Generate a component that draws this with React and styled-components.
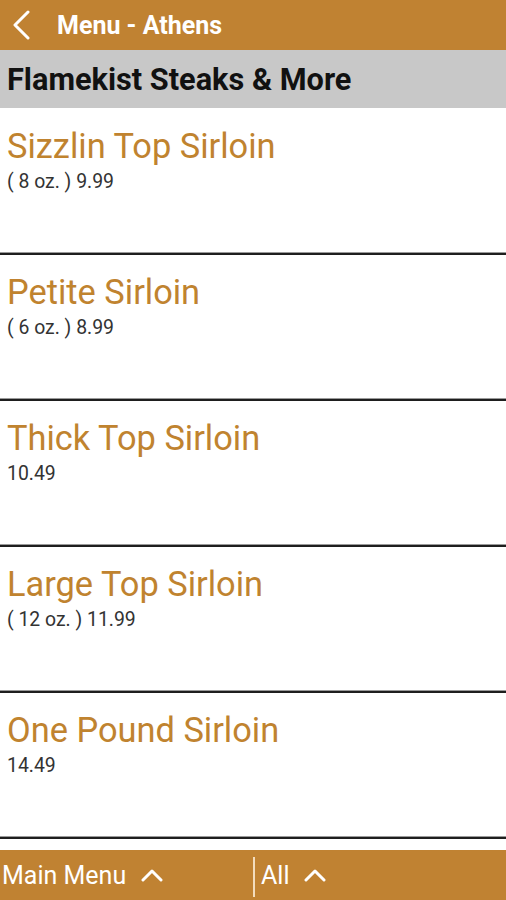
import styled, { createGlobalStyle } from 'styled-components';

const GlobalStyle = createGlobalStyle`
  html, body {
    margin: 0;
    padding: 0;
    background: #fff;
    font-family: Roboto, "Liberation Sans", sans-serif;
  }
`;

const Screen = styled.div`
  width: 506px;
  height: 900px;
  display: flex;
  flex-direction: column;
  overflow: hidden;
  background: #fff;
`;

const TopBar = styled.div`
  height: 50px;
  background: #c08232;
  display: flex;
  align-items: center;
  padding-left: 12px;
  gap: 27px;
  flex-shrink: 0;
`;

const BackButton = styled.button`
  background: none;
  border: none;
  padding: 0;
  width: 18px;
  height: 30px;
  display: flex;
  align-items: center;
  cursor: pointer;
`;

const Title = styled.h1`
  margin: 0;
  color: #fff;
  font-size: 25px;
  font-weight: 700;
`;

const SectionBar = styled.div`
  height: 58px;
  background: #c8c8c8;
  display: flex;
  align-items: center;
  padding-left: 7px;
  flex-shrink: 0;
`;

const SectionTitle = styled.h2`
  margin: 0;
  color: #111;
  font-size: 30.7px;
  font-weight: 700;
`;

const List = styled.div`
  flex: 1;
  overflow: hidden;
  padding-top: 1px;
`;

const Item = styled.div`
  height: 127px;
  padding: 17px 7px 0;
  border-bottom: 2px solid #1e1e1e;
  box-shadow: inset 0 -1px 0 #9a9a9a;
`;

const ItemName = styled.div`
  color: #c0832f;
  font-size: 34.4px;
  line-height: 40px;
`;

const ItemPrice = styled.div`
  color: #333;
  font-size: 19.4px;
  line-height: 22px;
  margin-top: 5px;
`;

const BottomBar = styled.div`
  height: 50px;
  background: #c08232;
  display: flex;
  align-items: center;
  flex-shrink: 0;
`;

const Tab = styled.div`
  display: flex;
  align-items: center;
  gap: 15px;
  color: #fff;
  font-size: 25px;
  width: ${p => p.width}px;
  padding-left: ${p => p.pad}px;
  box-sizing: border-box;
`;

const Divider = styled.div`
  width: 2px;
  height: 40px;
  background: #f3dcbc;
  margin-top: 3px;
`;

const items = [
  { name: 'Sizzlin Top Sirloin', price: '( 8 oz. ) 9.99' },
  { name: 'Petite Sirloin', price: '( 6 oz. ) 8.99' },
  { name: 'Thick Top Sirloin', price: '10.49' },
  { name: 'Large Top Sirloin', price: '( 12 oz. ) 11.99' },
  { name: 'One Pound Sirloin', price: '14.49' },
];

const ChevronUp = () => (
  <svg width="22" height="14" viewBox="0 0 22 14" fill="none">
    <path d="M2 12 L11 3 L20 12" stroke="#fff" strokeWidth="3" strokeLinecap="round" strokeLinejoin="round" />
  </svg>
);

export default function App() {
  return (
    <Screen>
      <GlobalStyle />
      <TopBar>
        <BackButton aria-label="Back">
          <svg width="18" height="30" viewBox="0 0 18 30" fill="none">
            <path d="M16 2 L3 15 L16 28" stroke="#fff" strokeWidth="3" strokeLinecap="round" strokeLinejoin="round" />
          </svg>
        </BackButton>
        <Title>Menu - Athens</Title>
      </TopBar>
      <SectionBar>
        <SectionTitle>Flamekist Steaks &amp; More</SectionTitle>
      </SectionBar>
      <List>
        {items.map(it => (
          <Item key={it.name}>
            <ItemName>{it.name}</ItemName>
            <ItemPrice>{it.price}</ItemPrice>
          </Item>
        ))}
      </List>
      <BottomBar>
        <Tab width={253} pad={2}>Main Menu <ChevronUp /></Tab>
        <Divider />
        <Tab width={200} pad={6}>All <ChevronUp /></Tab>
      </BottomBar>
    </Screen>
  );
}
